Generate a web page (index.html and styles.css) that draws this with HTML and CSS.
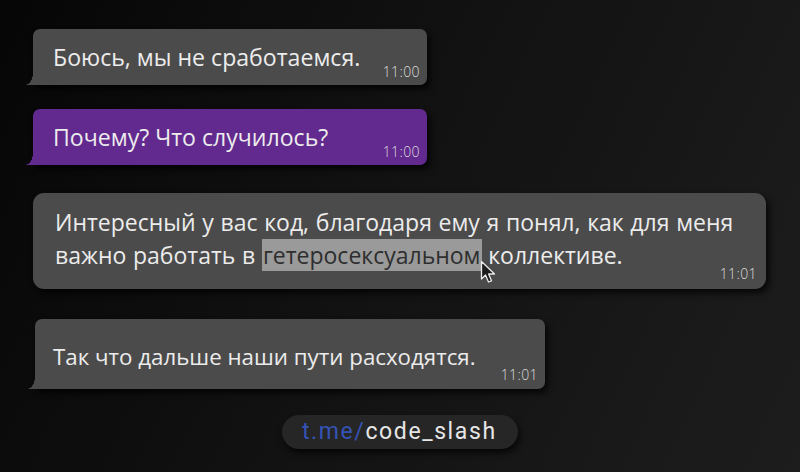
FILE: index.html
```html
<!DOCTYPE html>
<html lang="ru">
<head>
  <meta charset="UTF-8">
  <meta name="viewport" content="width=device-width, initial-scale=1.0">
  <title>Chat</title>
  <link rel="stylesheet" href="styles.css">
</head>
<body>
  <div class="chat">
    <div class="msg tail first">
      <p class="text">Боюсь, мы не сработаемся.</p>
      <span class="time">11:00</span>
    </div>

    <div class="msg tail purple second">
      <p class="text">Почему? Что случилось?</p>
      <span class="time">11:00</span>
    </div>

    <div class="msg long">
      <p class="text">Интересный у вас код, благодаря ему я понял, как для меня важно работать в <span class="sel">гетеросексуальном</span><span class="pointer"><svg width="18" height="24" viewBox="0 0 18 24"><path d="M1.5 1.5 L1.5 19 L5.5 15 L8.5 22 L11.5 20.8 L8.6 14 L14.5 14 Z" fill="#1c1c1c" stroke="#eaeaea" stroke-width="1.3" stroke-linejoin="round"/></svg></span> коллективе.</p>
      <span class="time">11:01</span>
    </div>

    <div class="msg tail last">
      <p class="text">Так что дальше наши пути расходятся.</p>
      <span class="time">11:01</span>
    </div>

    <div class="link"><span class="host">t.me/</span>code_slash</div>
  </div>
</body>
</html>
```

FILE: styles.css
```css
*{
    margin: 0;
    padding: 0;
    box-sizing: border-box;
}

body{
    width: 800px;
    height: 472px;
    overflow: hidden;
    background: linear-gradient(115deg, #060606 0%, #101010 40%, #1d1d1d 100%);
    font-family: "Open Sans", "Noto Sans", sans-serif;
    color: #ececec;
}

.chat{
    display: flex;
    flex-direction: column;
    align-items: flex-start;
    padding: 29px 0 0 33px;
}

.msg{
    position: relative;
    display: flex;
    align-items: flex-end;
    background: #4b4b4b;
    border-radius: 7px;
    box-shadow: 3px 4px 6px rgba(0, 0, 0, 0.75);
}

.msg .text{
    font-size: 22.3px;
    line-height: 33px;
}

.msg .time{
    font-size: 14px;
    line-height: 16px;
    font-weight: 300;
    color: #dcdcdc;
    letter-spacing: 0.4px;
}

.tail{
    border-bottom-left-radius: 0;
}

.tail::before{
    content: "";
    position: absolute;
    left: -8px;
    bottom: 0;
    width: 8px;
    height: 12px;
    background: radial-gradient(ellipse 8px 12px at 0 0, transparent 97%, #4b4b4b 100%);
}

.purple{
    background: #62298f;
}

.purple::before{
    background: radial-gradient(ellipse 8px 12px at 0 0, transparent 97%, #62298f 100%);
}

.first, .second{
    width: 394px;
    height: 56px;
    padding: 0 7px 0 20px;
    justify-content: space-between;
}

.first .text, .second .text{
    font-size: 23.1px;
    padding-bottom: 11px;
}

.first .time, .second .time{
    padding-bottom: 5px;
}

.second{
    margin-top: 24px;
}

.long{
    margin-top: 28px;
    width: 733px;
    flex-direction: column;
    align-items: stretch;
    padding: 13px 9px 7px 22px;
    border-radius: 11px;
}

.long .text{
    font-size: 23px;
    word-spacing: 0.7px;
}

.long .time{
    align-self: flex-end;
    margin-top: -6px;
}

.sel{
    background: #9a9a9a;
    color: #2e2e2e;
    padding: 0 1px;
}

.pointer{
    position: relative;
    display: inline-block;
    width: 0;
}

.pointer svg{
    position: absolute;
    left: -2px;
    top: -4px;
}

.last{
    margin: 30px 0 0 2px;
    width: 510px;
    height: 70px;
    padding: 0 7px 0 18px;
    justify-content: space-between;
}

.last .text{
    padding-bottom: 16px;
}

.last .time{
    padding-bottom: 6px;
}

.link{
    align-self: flex-start;
    margin: 26px 0 0 249px;
    height: 34px;
    padding: 0 21px 0 20px;
    border-radius: 17px;
    background: #262626;
    box-shadow: 2px 4px 6px rgba(0, 0, 0, 0.7);
    font-family: Roboto, "Noto Sans", sans-serif;
    font-size: 23px;
    line-height: 34px;
    letter-spacing: 1.6px;
    color: #e6e6e6;
}

.link .host{
    color: #3453b5;
}
```
